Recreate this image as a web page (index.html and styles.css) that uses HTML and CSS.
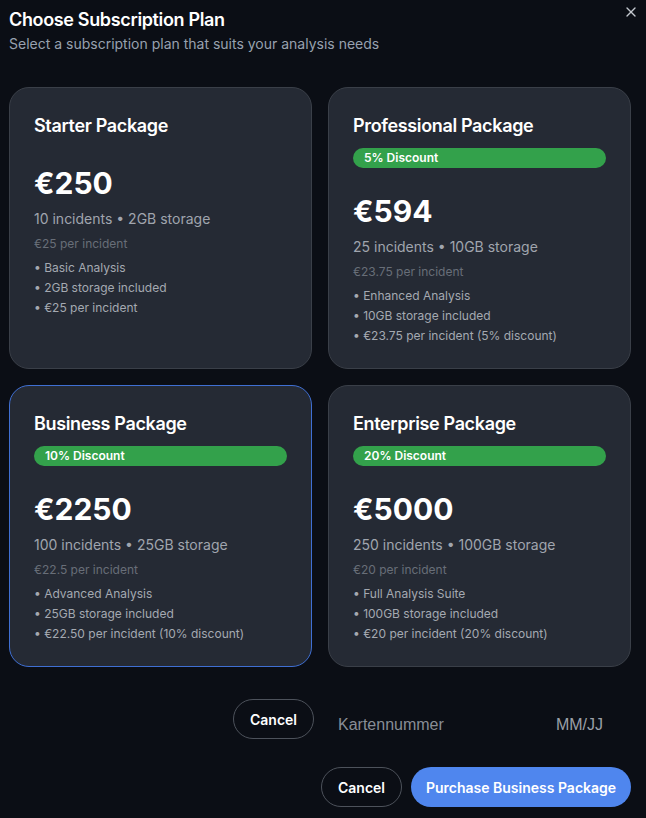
FILE: index.html
```html
<!DOCTYPE html>
<html lang="en">
<head>
<meta charset="utf-8">
<title>Choose Subscription Plan</title>
<link rel="stylesheet" href="styles.css">
</head>
<body>
<div class="dialog">
  <button class="close" aria-label="Close">
    <svg width="16" height="16" viewBox="0 0 24 24" fill="none" stroke="currentColor" stroke-width="2" stroke-linecap="round" stroke-linejoin="round"><path d="M18 6 6 18"/><path d="m6 6 12 12"/></svg>
  </button>
  <h1 class="title">Choose Subscription Plan</h1>
  <p class="subtitle">Select a subscription plan that suits your analysis needs</p>

  <div class="plans">
    <div class="card">
      <h3 class="card-title">Starter Package</h3>
      <div class="price">€250</div>
      <div class="meta">10 incidents • 2GB storage</div>
      <div class="per">€25 per incident</div>
      <ul class="features">
        <li>• Basic Analysis</li>
        <li>• 2GB storage included</li>
        <li>• €25 per incident</li>
      </ul>
    </div>
    <div class="card">
      <h3 class="card-title">Professional Package</h3>
      <div class="badge">5% Discount</div>
      <div class="price">€594</div>
      <div class="meta">25 incidents • 10GB storage</div>
      <div class="per">€23.75 per incident</div>
      <ul class="features">
        <li>• Enhanced Analysis</li>
        <li>• 10GB storage included</li>
        <li>• €23.75 per incident (5% discount)</li>
      </ul>
    </div>
    <div class="card selected">
      <h3 class="card-title">Business Package</h3>
      <div class="badge">10% Discount</div>
      <div class="price">€2250</div>
      <div class="meta">100 incidents • 25GB storage</div>
      <div class="per">€22.5 per incident</div>
      <ul class="features">
        <li>• Advanced Analysis</li>
        <li>• 25GB storage included</li>
        <li>• €22.50 per incident (10% discount)</li>
      </ul>
    </div>
    <div class="card">
      <h3 class="card-title">Enterprise Package</h3>
      <div class="badge">20% Discount</div>
      <div class="price">€5000</div>
      <div class="meta">250 incidents • 100GB storage</div>
      <div class="per">€20 per incident</div>
      <ul class="features">
        <li>• Full Analysis Suite</li>
        <li>• 100GB storage included</li>
        <li>• €20 per incident (20% discount)</li>
      </ul>
    </div>
  </div>

  <div class="payment-row">
    <button class="btn btn-outline">Cancel</button>
    <div class="card-field">
      <span class="ph-number">Kartennummer</span>
      <span class="ph-exp">MM/JJ</span>
    </div>
  </div>

  <div class="actions">
    <button class="btn btn-outline">Cancel</button>
    <button class="btn btn-primary">Purchase Business Package</button>
  </div>
</div>
</body>
</html>
```

FILE: styles.css
```css
* { box-sizing: border-box; }

html, body {
  margin: 0;
  padding: 0;
  background: #0b0e15;
  font-family: Inter, "Noto Sans", sans-serif;
  color: #ffffff;
}

.dialog {
  position: relative;
  padding: 6px 15px 12px 9px;
}

.close {
  position: absolute;
  top: 4px;
  left: 623px;
  width: 16px;
  height: 16px;
  padding: 0;
  border: 0;
  background: transparent;
  color: #c4c8cf;
  display: flex;
}

.title {
  margin: 0;
  font-size: 18px;
  line-height: 28px;
  font-weight: 600;
  letter-spacing: -0.35px;
}

.subtitle {
  margin: 0;
  font-size: 14px;
  line-height: 20px;
  color: #98a1af;
}

.plans {
  margin-top: 33px;
  display: grid;
  grid-template-columns: 1fr 1fr;
  gap: 16px;
}

.card {
  background: #252a34;
  border: 1px solid #3a3f48;
  border-radius: 20px;
  padding: 24px;
}

.card.selected {
  border-color: #3f6fd3;
}

.card-title {
  margin: 0;
  font-size: 18px;
  line-height: 28px;
  font-weight: 600;
  letter-spacing: -0.35px;
}

.badge {
  margin-top: 8px;
  height: 20px;
  line-height: 20px;
  border-radius: 999px;
  background: #33a14b;
  color: #ffffff;
  font-size: 12px;
  font-weight: 600;
  padding: 0 11px;
}

.price {
  margin-top: 25px;
  font-size: 30px;
  line-height: 36px;
  font-weight: 700;
}

.meta {
  margin-top: 8px;
  font-size: 14px;
  line-height: 20px;
  color: #a0a5ae;
}

.per {
  margin-top: 7px;
  font-size: 12px;
  line-height: 16px;
  color: #686e78;
}

.features {
  list-style: none;
  margin: 8px 0 0;
  padding: 0;
  display: flex;
  flex-direction: column;
  gap: 4px;
  font-size: 12px;
  line-height: 16px;
  color: #a4a9b1;
}

.payment-row {
  margin-top: 32px;
  display: flex;
  justify-content: flex-end;
  align-items: flex-start;
}

.card-field {
  width: 317px;
  display: flex;
  justify-content: space-between;
  padding: 14px 28px 0 24px;
  font-family: "Liberation Sans", Arial, sans-serif;
  font-size: 16px;
  line-height: 24px;
}

.ph-number { color: #888d96; }
.ph-exp { color: #9ba0a8; }

.actions {
  margin-top: 28px;
  display: flex;
  justify-content: flex-end;
  gap: 9px;
}

.btn {
  height: 40px;
  border-radius: 20px;
  font-family: inherit;
  font-size: 14px;
  font-weight: 600;
  color: #ffffff;
  white-space: nowrap;
  cursor: pointer;
}

.btn-outline {
  background: transparent;
  border: 1px solid #4d525b;
  padding: 0 12px;
  width: 81px;
}

.btn-primary {
  background: #4f86ee;
  border: 0;
  width: 220px;
  padding: 0 12px;
}
```
